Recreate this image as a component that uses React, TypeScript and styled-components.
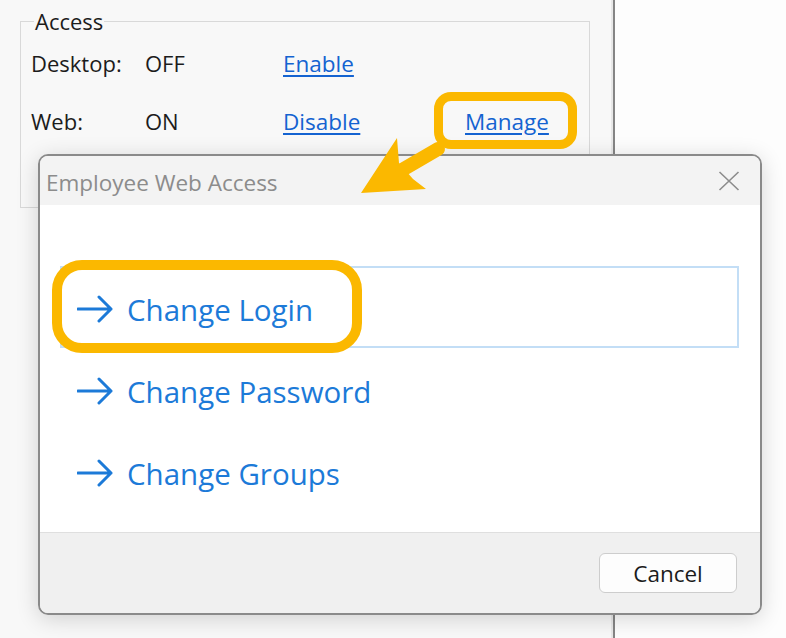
import React from "react";
import styled, { createGlobalStyle } from "styled-components";

const GlobalStyle = createGlobalStyle`
  html, body {
    margin: 0;
    padding: 0;
    background: #fdfdfd;
    font-family: "Open Sans", "Noto Sans", sans-serif;
  }
`;

const Screen = styled.div`
  position: relative;
  width: 786px;
  height: 638px;
  overflow: hidden;
  display: flex;
  background: #fdfdfd;
`;

const BackWindow = styled.div`
  width: 615px;
  height: 638px;
  box-sizing: border-box;
  padding: 8px 0 0 20px;
  background: #f8f8f8;
  border-right: 2px solid #858585;
  box-shadow: inset -2px 0 0 #e8e8e8;
`;

const GroupBox = styled.fieldset`
  margin: 0;
  width: 570px;
  box-sizing: border-box;
  padding: 0 10px 57px;
  border: 1px solid #d9d9d9;
`;

const Legend = styled.legend`
  margin-left: 3px;
  padding: 0 1px;
  font-size: 22px;
  line-height: 26px;
  color: #1c1c1c;
`;

const Row = styled.div`
  display: grid;
  grid-template-columns: 114px 138px 182px 1fr;
  align-items: center;
  height: 58px;
  font-size: 22px;
  color: #1c1c1c;
`;

const Link = styled.a`
  color: #1463d1;
  text-decoration: underline;
  text-decoration-thickness: 1.5px;
  text-underline-offset: 3px;
  font-size: 22.5px;
  cursor: pointer;
`;

const Dialog = styled.div`
  position: absolute;
  left: 38px;
  top: 154px;
  width: 724px;
  height: 461px;
  box-sizing: border-box;
  border: 2px solid #8a8a8a;
  border-radius: 10px;
  overflow: hidden;
  display: flex;
  flex-direction: column;
  box-shadow: 0 4px 22px rgba(0, 0, 0, 0.16);
`;

const TitleBar = styled.div`
  height: 49px;
  flex: none;
  display: flex;
  align-items: center;
  justify-content: space-between;
  box-sizing: border-box;
  padding: 3px 20px 0 6px;
  background: #f3f3f3;
  color: #8c8c8c;
  font-size: 22.5px;
`;

const CloseButton = styled.button`
  width: 22px;
  height: 20px;
  padding: 0;
  border: none;
  background: none;
  display: flex;
  margin-top: -3px;
`;

const Content = styled.div`
  flex: 1;
  background: #ffffff;
  padding: 61px 21px 0 20px;
  display: flex;
  flex-direction: column;
`;

const Item = styled.div<{ $focused?: boolean }>`
  height: 82px;
  box-sizing: border-box;
  display: flex;
  align-items: center;
  gap: 14px;
  padding: 4px 0 0 15px;
  border: 2px solid ${(p) => (p.$focused ? "#c3def6" : "transparent")};
  color: #1c7ad8;
  font-size: 29.5px;
  cursor: pointer;
`;

const Footer = styled.div`
  height: 81px;
  flex: none;
  box-sizing: border-box;
  border-top: 1px solid #dfdfdf;
  background: #f0f0f0;
  display: flex;
  justify-content: flex-end;
  align-items: flex-start;
  padding: 20px 23px 0 0;
`;

const Button = styled.button`
  width: 138px;
  height: 40px;
  border: 1px solid #cdcdcd;
  border-radius: 6px;
  background: #fdfdfd;
  color: #1b1b1b;
  font-family: "Open Sans", "Noto Sans", sans-serif;
  font-size: 22.5px;
  line-height: 1;
  padding: 2px 0 0;
`;

const Highlight = styled.div<{ $x: number; $y: number; $w: number; $h: number; $stroke: number; $radius: number }>`
  position: absolute;
  left: ${(p) => p.$x}px;
  top: ${(p) => p.$y}px;
  width: ${(p) => p.$w}px;
  height: ${(p) => p.$h}px;
  box-sizing: border-box;
  border: ${(p) => p.$stroke}px solid #fbb800;
  border-radius: ${(p) => p.$radius}px;
  pointer-events: none;
`;

const Pointer = styled.svg`
  position: absolute;
  left: 350px;
  top: 125px;
  width: 100px;
  height: 80px;
  pointer-events: none;
`;

function ArrowIcon() {
  return (
    <svg width="36" height="28" viewBox="0 0 36 28" fill="none">
      <path d="M1 14H34M22 2L34 14L22 26" stroke="currentColor" strokeWidth="3" strokeLinecap="round" strokeLinejoin="round" />
    </svg>
  );
}

const actions = ["Change Login", "Change Password", "Change Groups"];

export default function App() {
  return (
    <Screen>
      <GlobalStyle />
      <BackWindow>
        <GroupBox>
          <Legend>Access</Legend>
          <Row>
            <span>Desktop:</span>
            <span>OFF</span>
            <span><Link>Enable</Link></span>
            <span />
          </Row>
          <Row>
            <span>Web:</span>
            <span>ON</span>
            <span><Link>Disable</Link></span>
            <span><Link>Manage</Link></span>
          </Row>
        </GroupBox>
      </BackWindow>

      <Dialog>
        <TitleBar>
          <span>Employee Web Access</span>
          <CloseButton aria-label="Close">
            <svg width="22" height="20" viewBox="0 0 22 20">
              <path d="M1.5 1L20.5 19M20.5 1L1.5 19" stroke="#8c8c8c" strokeWidth="1.6" />
            </svg>
          </CloseButton>
        </TitleBar>
        <Content>
          {actions.map((a, i) => (
            <Item key={a} $focused={i === 0}>
              <ArrowIcon />
              <span>{a}</span>
            </Item>
          ))}
        </Content>
        <Footer>
          <Button>Cancel</Button>
        </Footer>
      </Dialog>

      <Highlight $x={434} $y={92} $w={143} $h={57} $stroke={9} $radius={17} />
      <Highlight $x={52} $y={260} $w={310} $h={93} $stroke={10} $radius={30} />
      <Pointer viewBox="350 125 100 80">
        <polygon points="361,193 397,138 399,163 413,179 426,189" fill="#fbb800" />
        <line x1="438" y1="149" x2="402" y2="170" stroke="#fbb800" strokeWidth="14" strokeLinecap="round" />
      </Pointer>
    </Screen>
  );
}
